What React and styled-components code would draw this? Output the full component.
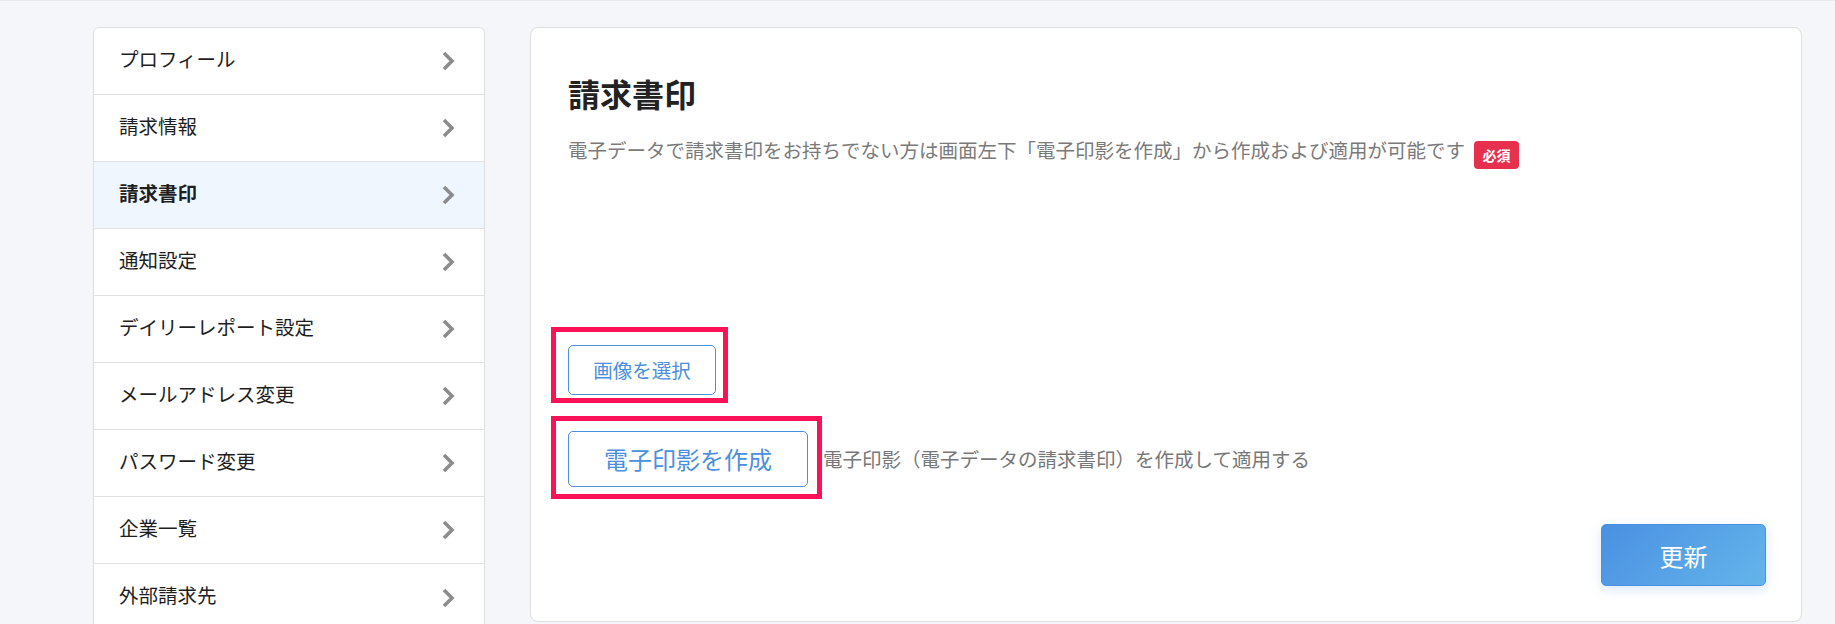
import styled, { createGlobalStyle } from "styled-components";

const GlobalStyle = createGlobalStyle`
  html, body {
    margin: 0;
    padding: 0;
    background: #f5f6fa;
    overflow: hidden;
  }

  body {
    font-family: "Noto Sans CJK JP", "Noto Sans", sans-serif;
    color: #222;
  }
`;

const menuItems = [
  "プロフィール",
  "請求情報",
  "請求書印",
  "通知設定",
  "デイリーレポート設定",
  "メールアドレス変更",
  "パスワード変更",
  "企業一覧",
  "外部請求先",
];

const Chevron = () => (
  <svg width="14" height="22" viewBox="0 0 14 22">
    <polyline
      points="3,3 11,11 3,19"
      fill="none"
      stroke="#8c8c8c"
      strokeWidth="3.6"
      strokeLinejoin="miter"
    />
  </svg>
);

const App = () => {
  return (
    <Page>
      <GlobalStyle />
      <SideMenu>
        {menuItems.map((label) => (
          <MenuRow key={label} active={label === "請求書印"}>
            <span>{label}</span>
            <Chevron />
          </MenuRow>
        ))}
      </SideMenu>

      <Card>
        <Title>請求書印</Title>
        <DescRow>
          <Desc>
            電子データで請求書印をお持ちでない方は画面左下「電子印影を作成」から作成および適用が可能です
          </Desc>
          <Badge>必須</Badge>
        </DescRow>

        <Preview />

        <Marked top={18} left={17} right={12} bottom={8}>
          <OutlineButton size="small">画像を選択</OutlineButton>
        </Marked>

        <CreateRow>
          <Marked top={15} left={17} right={14} bottom={12}>
            <OutlineButton size="large">電子印影を作成</OutlineButton>
          </Marked>
          <Hint>電子印影（電子データの請求書印）を作成して適用する</Hint>
        </CreateRow>

        <Footer>
          <SubmitButton>更新</SubmitButton>
        </Footer>
      </Card>
    </Page>
  );
};

const Page = styled.div`
  display: flex;
  align-items: flex-start;
  gap: 45px;
  padding: 26px 33px 0 93px;
  height: 624px;
  box-sizing: border-box;
  border-top: 1px solid #e7e8ec;
`;

const SideMenu = styled.nav`
  width: 392px;
  flex-shrink: 0;
  background: #fff;
  border: 1px solid #dedede;
  border-bottom: none;
  border-radius: 6px 6px 0 0;
  overflow: hidden;
  box-sizing: border-box;
`;

const MenuRow = styled.div`
  display: flex;
  align-items: center;
  justify-content: space-between;
  height: 67px;
  padding: 0 29px 5px 25px;
  box-sizing: border-box;
  border-bottom: 1px solid #e2e2e4;
  background: ${(p) => (p.active ? "#eff6fe" : "#fff")};
  font-size: 19.5px;
  font-weight: ${(p) => (p.active ? 700 : 400)};
  color: #1e1e1e;
  line-height: 1;

  svg {
    margin-top: 5px;
  }

  &:last-child {
    border-bottom: none;
  }
`;

const Card = styled.section`
  flex: 1;
  display: flex;
  flex-direction: column;
  align-items: flex-start;
  background: #fff;
  border: 1px solid #dedede;
  border-radius: 8px;
  padding: 47px 35px 35px 37px;
`;

const Title = styled.h1`
  margin: 0;
  font-size: 32px;
  line-height: 36px;
  font-weight: 700;
  color: #222;
`;

const DescRow = styled.div`
  display: flex;
  align-items: flex-start;
  gap: 9px;
  margin-top: 25px;
`;

const Desc = styled.p`
  margin: 0;
  font-size: 19.5px;
  line-height: 28px;
  color: #7a7a7a;
`;

const Badge = styled.span`
  display: inline-flex;
  align-items: center;
  justify-content: center;
  margin-top: 5px;
  width: 45px;
  height: 28px;
  border-radius: 4px;
  background: #e6304d;
  color: #fff;
  font-size: 14px;
  font-weight: 700;
`;

const Preview = styled.div`
  height: 176px;
`;

const Marked = styled.div`
  position: relative;
  display: inline-flex;

  &::after {
    content: "";
    position: absolute;
    top: -${(p) => p.top}px;
    left: -${(p) => p.left}px;
    right: -${(p) => p.right}px;
    bottom: -${(p) => p.bottom}px;
    border: 5px solid #ff1158;
    pointer-events: none;
  }
`;

const OutlineButton = styled.button`
  display: inline-flex;
  align-items: center;
  justify-content: center;
  width: ${(p) => (p.size === "large" ? "240px" : "148px")};
  height: ${(p) => (p.size === "large" ? "56px" : "50px")};
  padding: 0;
  background: #fff;
  border: 1px solid #4a90e2;
  border-radius: 5px;
  color: #4a8fe0;
  font-family: inherit;
  font-size: ${(p) => (p.size === "large" ? "24px" : "19.5px")};
  line-height: 1;
  cursor: pointer;
`;

const CreateRow = styled.div`
  display: flex;
  align-items: center;
  gap: 15px;
  margin-top: 36px;
`;

const Hint = styled.span`
  font-size: 19.5px;
  color: #777;
  line-height: 28px;
`;

const Footer = styled.div`
  display: flex;
  justify-content: flex-end;
  align-self: stretch;
  margin-top: 37px;
`;

const SubmitButton = styled.button`
  width: 165px;
  height: 62px;
  border: 1px solid #4a90e2;
  border-radius: 5px;
  background: linear-gradient(135deg, #4a90e2 0%, #64b5eb 100%);
  color: #fff;
  font-family: inherit;
  font-size: 24px;
  box-shadow: 0 4px 12px rgba(74, 144, 226, 0.2);
  cursor: pointer;
`;

export default App;
